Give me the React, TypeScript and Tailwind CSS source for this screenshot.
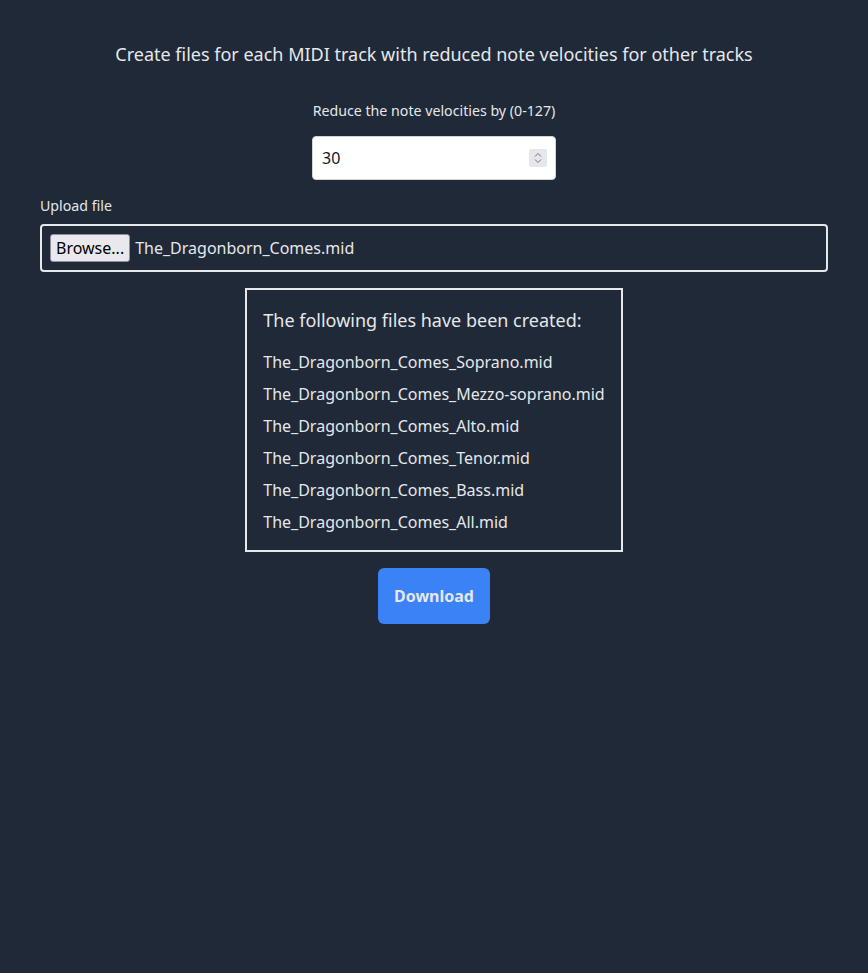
import React from "react";

export default function App() {
  const files = [
    "The_Dragonborn_Comes_Soprano.mid",
    "The_Dragonborn_Comes_Mezzo-soprano.mid",
    "The_Dragonborn_Comes_Alto.mid",
    "The_Dragonborn_Comes_Tenor.mid",
    "The_Dragonborn_Comes_Bass.mid",
    "The_Dragonborn_Comes_All.mid",
  ];
  return (
    <div
      className="min-h-[973px] bg-[#1f2937] text-[#e5e7eb] px-10 pt-10"
      style={{ fontFamily: '"Noto Sans", sans-serif' }}
    >
      <h1 className="text-center text-lg leading-7">
        Create files for each MIDI track with reduced note velocities for other tracks
      </h1>
      <div className="mt-[33px] flex flex-col items-center">
        <label className="text-[14.2px] leading-5">Reduce the note velocities by (0-127)</label>
        <div className="mt-[15px] w-[244px] h-[44px] bg-white rounded-[4px] border border-gray-300 flex items-center pl-[9px] pr-[8px]">
          <span className="flex-1 text-base text-[#111827]">30</span>
          <div className="w-[18px] h-[18px] bg-[#e5e7eb] flex flex-col items-center justify-center rounded-[2px]">
            <svg width="8" height="14" viewBox="0 0 8 14" fill="none" stroke="#6b7280" strokeWidth="1">
              <path d="M1 5.5 L4 2.5 L7 5.5" />
              <path d="M1 8.5 L4 11.5 L7 8.5" />
            </svg>
          </div>
        </div>
      </div>
      <div className="mt-4">
        <div className="text-[14.2px] leading-5">Upload file</div>
        <div className="mt-2 h-[48px] border-2 border-[#e5e7eb] rounded-[4px] flex items-center pl-2">
          <span className="h-[28px] px-[5px] flex items-center bg-[#e9e9ed] text-black border border-[#8f8f9d] rounded-[3px] text-base">
            Browse...
          </span>
          <span className="ml-[5px] text-base">The_Dragonborn_Comes.mid</span>
        </div>
      </div>
      <div className="mt-4 flex justify-center">
        <div className="border-2 border-[#e5e7eb] p-4 flex flex-col gap-4">
          <div className="text-lg leading-7">The following files have been created:</div>
          <div className="flex flex-col gap-2">
            {files.map((f) => (
              <div key={f} className="text-base leading-6">
                {f}
              </div>
            ))}
          </div>
        </div>
      </div>
      <div className="mt-4 flex justify-center">
        <button className="h-14 px-4 bg-[#3b82f6] rounded-md font-bold text-base text-[#e5e7eb]">
          Download
        </button>
      </div>
    </div>
  );
}
